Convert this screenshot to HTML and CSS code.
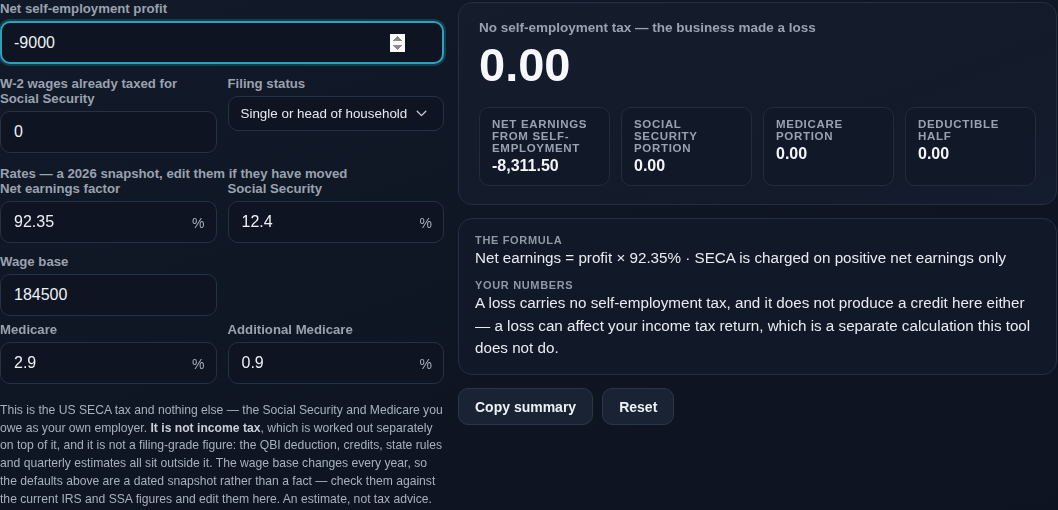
FILE: index.html
```html
<!DOCTYPE html>
<html lang="en">
<head>
<meta charset="utf-8">
<title>Self-employment tax calculator</title>
<link rel="stylesheet" href="styles.css">
</head>
<body>
<div class="app">
  <section class="inputs">
    <div class="field">
      <label class="lbl" for="profit">Net self-employment profit</label>
      <input id="profit" class="inp inp-focus" type="number" value="-9000" autofocus>
    </div>

    <div class="row">
      <div class="field">
        <label class="lbl" for="w2">W-2 wages already taxed for Social Security</label>
        <input id="w2" class="inp" type="text" value="0">
      </div>
      <div class="field">
        <label class="lbl" for="status">Filing status</label>
        <div class="select-wrap">
          <select id="status" class="sel">
            <option>Single or head of household</option>
          </select>
          <svg class="chev" width="11" height="7" viewBox="0 0 11 7"><path d="M1.2 1.3 5.5 5.6 9.8 1.3" fill="none" stroke="#c9ced8" stroke-width="1.3" stroke-linecap="round" stroke-linejoin="round"/></svg>
        </div>
      </div>
    </div>

    <div class="rates-head">Rates — a 2026 snapshot, edit them if they have moved</div>
    <div class="row row-tight">
      <div class="field">
        <label class="lbl" for="nef">Net earnings factor</label>
        <div class="pct-wrap"><input id="nef" class="inp" type="text" value="92.35"><span class="pct">%</span></div>
      </div>
      <div class="field">
        <label class="lbl" for="ss">Social Security</label>
        <div class="pct-wrap"><input id="ss" class="inp" type="text" value="12.4"><span class="pct">%</span></div>
      </div>
    </div>

    <div class="row row-wage">
      <div class="field">
        <label class="lbl" for="wb">Wage base</label>
        <input id="wb" class="inp" type="text" value="184500">
      </div>
    </div>

    <div class="row row-med">
      <div class="field">
        <label class="lbl" for="med">Medicare</label>
        <div class="pct-wrap"><input id="med" class="inp" type="text" value="2.9"><span class="pct">%</span></div>
      </div>
      <div class="field">
        <label class="lbl" for="amed">Additional Medicare</label>
        <div class="pct-wrap"><input id="amed" class="inp" type="text" value="0.9"><span class="pct">%</span></div>
      </div>
    </div>

    <p class="note">This is the US SECA tax and nothing else — the Social Security and Medicare you owe as your own employer. <strong>It is not income tax</strong>, which is worked out separately on top of it, and it is not a filing-grade figure: the QBI deduction, credits, state rules and quarterly estimates all sit outside it. The wage base changes every year, so the defaults above are a dated snapshot rather than a fact — check them against the current IRS and SSA figures and edit them here. An estimate, not tax advice.</p>
  </section>

  <section class="results">
    <div class="card result">
      <div class="headline">No self-employment tax — the business made a loss</div>
      <div class="big">0.00</div>
      <div class="stats">
        <div class="stat"><div class="stat-lbl">Net earnings from self-employment</div><div class="stat-val">-8,311.50</div></div>
        <div class="stat"><div class="stat-lbl">Social Security portion</div><div class="stat-val">0.00</div></div>
        <div class="stat"><div class="stat-lbl">Medicare portion</div><div class="stat-val">0.00</div></div>
        <div class="stat"><div class="stat-lbl">Deductible half</div><div class="stat-val">0.00</div></div>
      </div>
    </div>

    <div class="card formula">
      <div class="f-lbl">The formula</div>
      <div class="f-text">Net earnings = profit × 92.35% · SECA is charged on positive net earnings only</div>
      <div class="f-lbl f-lbl2">Your numbers</div>
      <div class="f-text">A loss carries no self-employment tax, and it does not produce a credit here either — a loss can affect your income tax return, which is a separate calculation this tool does not do.</div>
    </div>

    <div class="actions">
      <button class="btn" type="button">Copy summary</button>
      <button class="btn" type="button">Reset</button>
    </div>
  </section>
</div>
</body>
</html>
```

FILE: styles.css
```css
* { box-sizing: border-box; }

html, body {
  margin: 0;
  padding: 0;
  height: 100%;
}

body {
  background: linear-gradient(160deg, #121a29 0%, #0f1624 45%, #0d1320 100%);
  color: #e6eaf0;
  font-family: "Liberation Sans", Arial, sans-serif;
  overflow: hidden;
}

.app {
  display: grid;
  grid-template-columns: 444px 599px;
  gap: 14px;
  padding-top: 1px;
}

.inputs {
  display: flex;
  flex-direction: column;
}

.field {
  display: flex;
  flex-direction: column;
  min-width: 0;
}

.lbl {
  font-size: 13.2px;
  font-weight: 700;
  line-height: 15px;
  color: #9aa2b0;
  margin-bottom: 5px;
}

.inp {
  width: 100%;
  height: 42px;
  background: #0e1421;
  border: 1px solid #273144;
  border-radius: 10px;
  color: #eef1f5;
  font-family: "Liberation Sans", Arial, sans-serif;
  font-size: 16px;
  padding: 0 13px;
  outline: none;
}

.inp-focus {
  height: 43px;
  border: 2px solid #2aa3bd;
  box-shadow: 0 0 0 2px rgba(42, 163, 189, 0.25);
  padding: 0 37px 0 12px;
}

.row {
  display: grid;
  grid-template-columns: 1fr 1fr;
  gap: 11px;
  margin-top: 12px;
}

.row-tight { margin-top: 0; }
.row-wage { margin-top: 11px; }
.row-med { margin-top: 6px; }

.select-wrap { position: relative; }

.sel {
  width: 100%;
  height: 35px;
  appearance: none;
  -webkit-appearance: none;
  background: #0e1421;
  border: 1px solid #273144;
  border-radius: 10px;
  color: #e6eaf0;
  font-family: "Liberation Sans", Arial, sans-serif;
  font-size: 13.4px;
  padding: 0 12px;
}

.chev {
  position: absolute;
  right: 17px;
  top: 14px;
  pointer-events: none;
}

.pct-wrap { position: relative; }

.pct {
  position: absolute;
  right: 12px;
  top: 14px;
  font-size: 14px;
  color: #a7afbc;
  pointer-events: none;
}

.rates-head {
  margin-top: 13px;
  font-size: 13.2px;
  font-weight: 700;
  line-height: 15px;
  color: #9aa2b0;
}

.note {
  margin: 18px -2px 0 0;
  font-size: 12.15px;
  line-height: 17.7px;
  color: #a8b0bd;
}

.note strong { color: #c9ced7; }

.results {
  display: flex;
  flex-direction: column;
  padding-top: 1px;
}

.card {
  background: linear-gradient(160deg, #151d2d 0%, #131a29 60%, #141d2e 100%);
  border: 1px solid #252f41;
  border-radius: 14px;
}

.result {
  padding: 17px 20px 18px 20px;
}

.headline {
  font-size: 13.5px;
  font-weight: 700;
  line-height: 15px;
  color: #9aa2b0;
}

.big {
  font-size: 47px;
  font-weight: 700;
  line-height: 54px;
  color: #f6f8fb;
  margin-top: 3px;
}

.stats {
  display: grid;
  grid-template-columns: repeat(4, 1fr);
  gap: 11px;
  margin-top: 15px;
}

.stat {
  background: #111827;
  border: 1px solid #222c3d;
  border-radius: 10px;
  padding: 10px 12px 10px;
  min-height: 79px;
}

.stat-lbl {
  font-size: 11.5px;
  font-weight: 700;
  text-transform: uppercase;
  letter-spacing: 0.06em;
  line-height: 12px;
  color: #9aa2b0;
}

.stat-val {
  font-size: 16px;
  font-weight: 700;
  line-height: 18px;
  color: #f3f5f8;
  margin-top: 3px;
}

.formula {
  margin-top: 13px;
  padding: 15px 16px 14px 16px;
  background: #111827;
}

.f-lbl {
  font-size: 11px;
  font-weight: 700;
  text-transform: uppercase;
  letter-spacing: 0.06em;
  line-height: 13px;
  color: #8f98a7;
}

.f-lbl2 { margin-top: 9px; }

.f-text {
  font-size: 15.2px;
  line-height: 22.8px;
  color: #e8ecf1;
}

.actions {
  display: flex;
  gap: 9px;
  margin-top: 13px;
}

.btn {
  height: 37px;
  padding: 0 16px;
  background: #1a2334;
  border: 1px solid #2c3649;
  border-radius: 10px;
  color: #eef1f5;
  font-family: "Liberation Sans", Arial, sans-serif;
  font-size: 14px;
  font-weight: 700;
}
```
